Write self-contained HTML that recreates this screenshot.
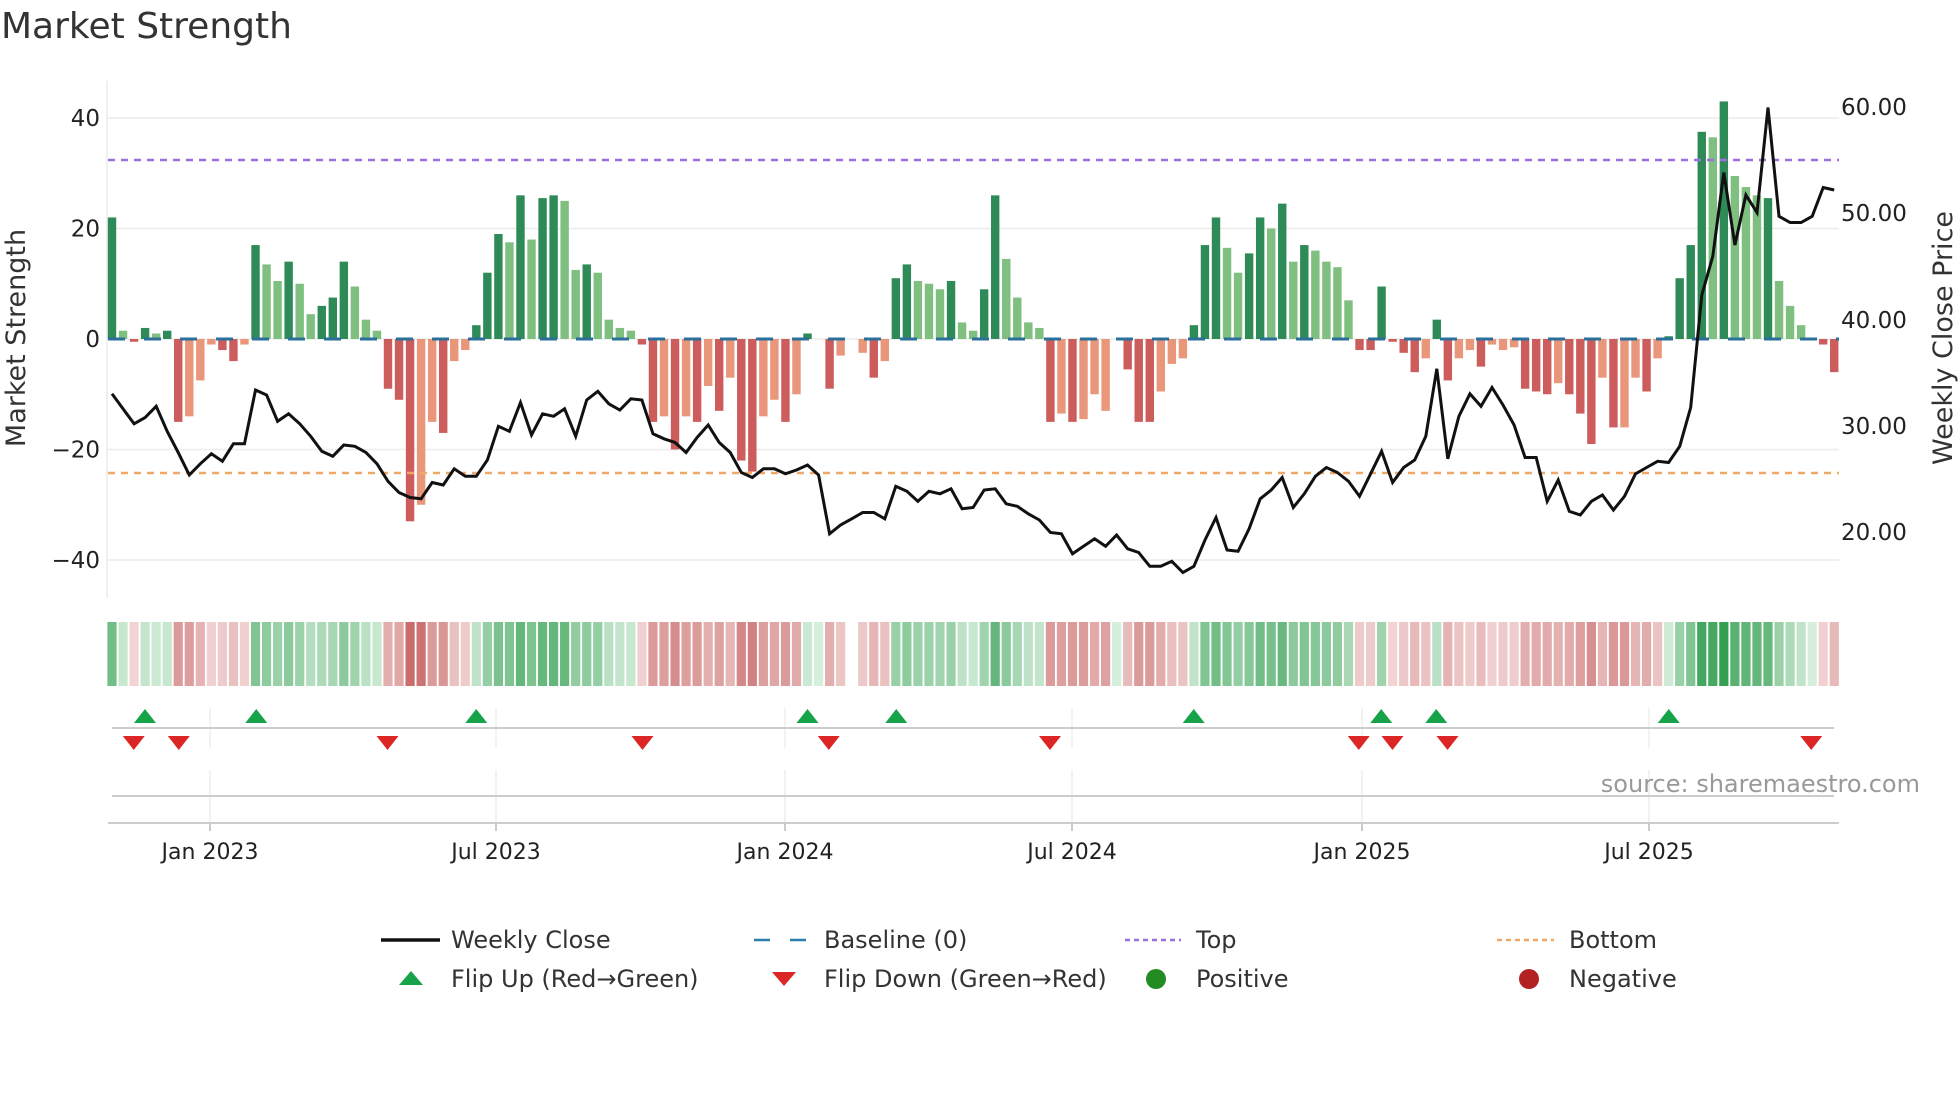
<!DOCTYPE html>
<html><head><meta charset="utf-8"><style>
html,body{margin:0;padding:0;background:#fff;}
svg{display:block;font-family:"DejaVu Sans","Liberation Sans",sans-serif;}
</style></head><body>
<svg id="c" width="1960" height="1102" viewBox="0 0 1960 1102" xmlns="http://www.w3.org/2000/svg"></svg>
<script>
var B="22d 1.5l -0.5d 2d 1l 1.5d -15d -14l -7.5l -1l -2d -4d -1l 17d 13.5l 10.5l 14d 10l 4.5l 6d 7.5d 14d 9.5l 3.5l 1.5l -9d -11d -33d -30l -15l -17d -4l -2l 2.5d 12d 19d 17.5l 26d 18l 25.5d 26d 25l 12.5l 13.5d 12l 3.5l 2l 1.5l -1d -15d -14l -20d -14l -15d -8.5l -13d -7l -22d -24d -14l -11l -15d -10l 1d 0d -9d -3l 0d -2.5l -7d -4l 11d 13.5d 10.5l 10l 9l 10.5d 3l 1.5l 9d 26d 14.5l 7.5l 3l 2l -15d -13.5l -15d -14.5l -10l -13l 0d -5.5d -15d -15d -9.5l -4.5l -3.5l 2.5d 17d 22d 16.5l 12l 15.5d 22d 20l 24.5d 14l 17d 16l 14l 13l 7l -2d -2d 9.5d -0.5d -2.5d -6d -3.5l 3.5d -7.5d -3.5l -2l -5d -1l -2l -1.5l -9d -9.5d -10d -8l -10d -13.5d -19d -7l -16d -16l -7l -9.5d -3.5l 0.5d 11d 17d 37.5d 36.5l 43d 29.5l 27.5l 26l 25.5d 10.5l 6l 2.5l 0d -1d -6d".split(" ");
var P=[315,327,339,334,325,345,362,380,371,363,369,355,355,312,316,337,331,339,349,361,365,356,357,362,371,385,394,398,399,386,388,375,381,381,368,341,345,322,348,331,333,327,349,320,313,323,328,319,320,347,351,354,362,350,340,354,362,378,382,375,375,379,376,372,380,427,420,415,410,410,415,389,393,401,393,395,391,407,406,392,391,403,405,411,416,426,427,443,437,431,437,428,439,442,453,453,449,458,453,432,414,440,441,423,399,392,382,406,395,381,374,378,385,397,379,361,386,374,368,349,295,367,333,315,325,310,324,340,366,366,401,384,409,412,401,396,408,397,379,374,369,370,357,326,236,205,138,196,156,170,86,173,178,178,173,150,152];
var s='';
function X(i){return 112+i*11.04;}
var Y0=339,K=5.525;
[40,20,0,-20,-40].forEach(function(v){var y=Y0-v*K;s+='<line x1="108" x2="1839" y1="'+y+'" y2="'+y+'" stroke="#ececec" stroke-width="1.5"/>';
s+='<text x="100" y="'+(y+8)+'" font-size="23" fill="#222" text-anchor="end">'+(v<0?'\u2212'+(-v):v)+'</text>';});
s+='<line x1="107" x2="107" y1="81" y2="598" stroke="#ececec" stroke-width="1.5"/>';
[['60.00',107],['50.00',213],['40.00',320],['30.00',426],['20.00',532]].forEach(function(a){s+='<text x="1841" y="'+(a[1]+8)+'" font-size="23" fill="#222">'+a[0]+'</text>';});
B.forEach(function(b,i){var v=parseFloat(b),t=b.slice(-1);if(v==0)return;var c=v>0?(t=='d'?'#2e8b57':'#7fbf7f'):(t=='d'?'#cd5c5c':'#e9967a');var h=Math.abs(v)*K;var y=v>0?Y0-h:Y0;s+='<rect x="'+(X(i)-4.2)+'" y="'+y+'" width="8.4" height="'+h+'" fill="'+c+'"/>';});
s+='<line x1="108" x2="1839" y1="'+Y0+'" y2="'+Y0+'" stroke="#2b6f9a" stroke-width="3" stroke-dasharray="17,19"/>';
s+='<line x1="108" x2="1839" y1="160" y2="160" stroke="#9b6fe0" stroke-width="2.5" stroke-dasharray="7,6"/>';
s+='<line x1="108" x2="1839" y1="473" y2="473" stroke="#f0a868" stroke-width="2.5" stroke-dasharray="7,6"/>';
var pts=P.map(function(y,i){return X(i).toFixed(1)+','+(y*1.25).toFixed(1);}).join(' ');
s+='<polyline points="'+pts+'" fill="none" stroke="#111" stroke-width="3" stroke-linejoin="miter"/>';
function mix(a,b,t){return 'rgb('+[0,1,2].map(function(k){return Math.round(a[k]+(b[k]-a[k])*t);}).join(',')+')';}
B.forEach(function(b,i){var v=parseFloat(b);if(i==67)return;var c;
 if(v>=0){var t=Math.min(1,Math.pow(v/43,0.7));c=mix([214,238,220],[52,160,82],t);}else{var t=Math.min(1,Math.pow(-v/33,0.7));c=mix([244,218,218],[202,108,108],t);}
 s+='<rect x="'+(X(i)-4.6)+'" y="622" width="9.2" height="64" fill="'+c+'"/>';});
var tk=[['Jan 2023',210],['Jul 2023',496],['Jan 2024',785],['Jul 2024',1072],['Jan 2025',1362],['Jul 2025',1649]];
tk.forEach(function(a){s+='<line x1="'+a[1]+'" x2="'+a[1]+'" y1="708" y2="748" stroke="#eee" stroke-width="1.5"/><line x1="'+a[1]+'" x2="'+a[1]+'" y1="770" y2="822" stroke="#eee" stroke-width="1.5"/>';
s+='<line x1="'+a[1]+'" x2="'+a[1]+'" y1="823" y2="831" stroke="#bbb" stroke-width="1.5"/><text x="'+a[1]+'" y="859" font-size="22" fill="#222" text-anchor="middle">'+a[0]+'</text>';});
s+='<line x1="112" x2="1834" y1="728" y2="728" stroke="#ccc" stroke-width="2"/>';
s+='<line x1="112" x2="1834" y1="796" y2="796" stroke="#ccc" stroke-width="2"/>';
s+='<line x1="108" x2="1839" y1="823" y2="823" stroke="#ccc" stroke-width="2"/>';
[116,205,381,646,717,955,1105,1149,1335].forEach(function(x){x*=1.25;s+='<polygon points="'+(x-11)+',723 '+(x+11)+',723 '+x+',709" fill="#17a34a"/>';});
[107,143,310,514,663,840,1087,1114,1158,1449].forEach(function(x){x*=1.25;s+='<polygon points="'+(x-11)+',736 '+(x+11)+',736 '+x+',750" fill="#dc2626"/>';});
s+='<text x="1920" y="792" font-size="24" fill="#999" text-anchor="end">source: sharemaestro.com</text>';
s+='<text x="1" y="38" font-size="36" fill="#333">Market Strength</text>';
s+='<text transform="translate(25,338) rotate(-90)" font-size="27" fill="#333" text-anchor="middle">Market Strength</text>';
s+='<text transform="translate(1952,338) rotate(-90)" font-size="27" fill="#333" text-anchor="middle">Weekly Close Price</text>';
var L='',F=' font-size="24" fill="#333"';
L+='<line x1="381" x2="440" y1="940" y2="940" stroke="#111" stroke-width="3.5"/><text x="451" y="948"'+F+'>Weekly Close</text>';
L+='<line x1="754" x2="806" y1="940" y2="940" stroke="#2b7fb0" stroke-width="2.5" stroke-dasharray="16,20"/><text x="824" y="948"'+F+'>Baseline (0)</text>';
L+='<line x1="1125" x2="1181" y1="940" y2="940" stroke="#9b6fe0" stroke-width="2.5" stroke-dasharray="5,4"/><text x="1196" y="948"'+F+'>Top</text>';
L+='<line x1="1497" x2="1554" y1="940" y2="940" stroke="#f0a868" stroke-width="2.5" stroke-dasharray="5,4"/><text x="1569" y="948"'+F+'>Bottom</text>';
L+='<polygon points="399,985 423,985 411,971" fill="#17a34a"/><text x="451" y="987"'+F+'>Flip Up (Red\u2192Green)</text>';
L+='<polygon points="772,972 796,972 784,986" fill="#dc2626"/><text x="824" y="987"'+F+'>Flip Down (Green\u2192Red)</text>';
L+='<circle cx="1156" cy="979" r="10" fill="#228b22"/><text x="1196" y="987"'+F+'>Positive</text>';
L+='<circle cx="1529" cy="979" r="10" fill="#b22222"/><text x="1569" y="987"'+F+'>Negative</text>';
s+=L;
document.getElementById('c').innerHTML=s;
</script>
</body></html>
